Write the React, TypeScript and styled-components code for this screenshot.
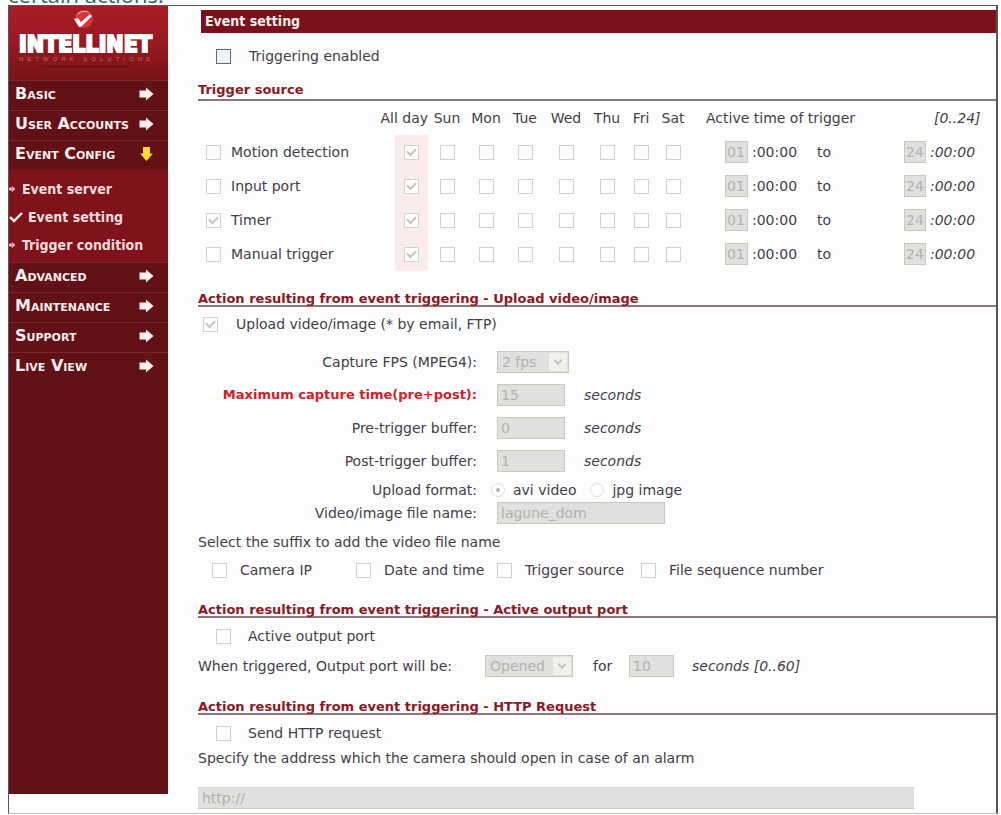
import React from "react";
import styled, { createGlobalStyle, css } from "styled-components";

const sans = `"DejaVu Sans", Verdana, sans-serif`;
const narrow = `"DejaVu Sans Condensed", "DejaVu Sans", Tahoma, sans-serif`;

const GlobalStyle = createGlobalStyle`
  * { box-sizing: border-box; }
  body { margin: 0; background: #fdfdfd; color: #443e48; font: 14px/16px ${sans}; }
  input, select, button { font: inherit; margin: 0; }
`;

const Page = styled.div`
  padding: 0 3px 0 8px;
`;

const Intro = styled.p`
  display: flex;
  align-items: flex-end;
  height: 5px;
  margin: 0;
  overflow: hidden;
  font: 22px/21px "Open Sans", sans-serif;
  color: #555;
`;

const Frame = styled.div`
  display: flex;
  align-items: flex-start;
  border: 1px solid #56565a;
  border-right-width: 2px;
  border-bottom-color: #c4c4c0;
`;

const Sidebar = styled.nav`
  flex: none;
  width: 159px;
  min-height: 788px;
  background: #621117;
  color: #fbeeee;
`;

const Brand = styled.div`
  height: 74px;
  background: linear-gradient(#a81d25, #9a1a22 45%, #7a131a);

  svg { display: block; }
`;

const Menu = styled.ul`
  list-style: none;
  margin: 0;
  padding: 0;
`;

const MenuButton = styled.button`
  display: flex;
  align-items: center;
  justify-content: space-between;
  width: 100%;
  height: 30px;
  padding: 0 14px 3px 6px;
  border: 0;
  border-top: 1px solid #7d252c;
  background: none;
  color: inherit;
  font: bold small-caps 16px/20px ${sans};
  text-align: left;
  white-space: nowrap;
`;

const SubMenu = styled(Menu)`
  padding: 5px 0 3px;
  background: #7f121a;
`;

const SubLink = styled.a`
  display: flex;
  align-items: center;
  gap: 5px;
  height: 28px;
  color: #f6dcdc;
  font: bold 14px/16px ${narrow};
  text-decoration: none;
  white-space: nowrap;
`;

const Main = styled.main`
  flex: 1;
  min-width: 0;
  padding: 4px 0 4px 30px;
`;

const TitleBar = styled.h1`
  margin: 0 0 0 3px;
  padding: 0 4px;
  background: #7a121b;
  color: #fbeeee;
  font: bold 14px/23px ${narrow};
`;

const Heading = styled.h2<{ $gap?: number; $line?: number }>`
  margin: ${(p) => p.$gap ?? 0}px 0 0;
  border-bottom: 2px solid #8e777a;
  color: #8c1922;
  font: bold 13px/${(p) => p.$line ?? 12}px ${sans};
`;

const Row = styled.div<{ $h: number; $indent?: number }>`
  display: flex;
  align-items: center;
  height: ${(p) => p.$h}px;
  padding-left: ${(p) => p.$indent ?? 0}px;
  white-space: nowrap;
`;

const CheckLabel = styled.label<{ $gap?: number; $w?: number }>`
  display: flex;
  align-items: center;
  gap: ${(p) => p.$gap ?? 14}px;
  width: ${(p) => (p.$w ? p.$w + "px" : "auto")};
  white-space: nowrap;
`;

const Check = styled.input.attrs({ type: "checkbox" })`
  appearance: none;
  flex: none;
  display: inline-grid;
  place-items: center;
  width: 15px;
  height: 15px;
  border: 1px solid #d3d1cd;
  background: #fefefe;
  vertical-align: middle;

  &:enabled { border-color: #4d7186; background: #f1f5f7; }

  &:checked::after {
    content: "";
    width: 7px;
    height: 4px;
    margin-top: -2px;
    border: solid #c6c2be;
    border-width: 0 0 2px 2px;
    transform: rotate(-45deg);
  }
`;

const Radio = styled.input.attrs({ type: "radio" })`
  appearance: none;
  flex: none;
  display: grid;
  place-items: center;
  width: 14px;
  height: 14px;
  border: 1px solid #e2e0da;
  border-radius: 50%;

  &:checked::after {
    content: "";
    width: 4px;
    height: 4px;
    border-radius: 50%;
    background: #b5b5b0;
  }
`;

const Schedule = styled.table`
  width: 100%;
  table-layout: fixed;
  border-collapse: collapse;
  white-space: nowrap;

  tr { height: 34px; }
  th, td { padding: 0; text-align: center; font-weight: normal; }
`;

const SourceCell = styled.th`
  && { padding-left: 8px; text-align: left; }
`;

const AllDayHead = styled.th`
  && { text-align: right; }
`;

const AllDayBox = styled.div`
  display: grid;
  place-items: center;
  width: 33px;
  height: 34px;
  margin-left: auto;
  background: #fbecec;
`;

const TimeCell = styled.td<{ $pad?: number }>`
  && { padding-left: ${(p) => p.$pad ?? 0}px; text-align: left; }
`;

const RangeHead = styled.th<{ $pad: number }>`
  && { padding-left: ${(p) => p.$pad}px; text-align: left; }
`;

const disabledBox = css`
  height: 22px;
  border: 1px solid #c8c8bc;
  border-radius: 0;
  background: #e0e0de;
  color: #b3b3ae;
  opacity: 1;
`;

const Field = styled.input<{ $w: number }>`
  ${disabledBox}
  width: ${(p) => p.$w}px;
  padding: 0 3px;
`;

const HourField = styled(Field)`
  padding: 0 1px;
  margin-right: 4px;
`;

const UrlField = styled(Field)`
  display: block;
  width: calc(100% - 82px);
  margin-top: 22px;
  border-color: #dcdcd8 #dcdcd8 #c8c8bc;
`;

const SelectWrap = styled.span<{ $w: number }>`
  position: relative;
  display: flex;
  width: ${(p) => p.$w}px;

  svg {
    position: absolute;
    top: 2px;
    right: 2px;
    pointer-events: none;
  }
`;

const Select = styled.select`
  ${disabledBox}
  appearance: none;
  width: 100%;
  padding: 0 4px;
`;

const Form = styled.div`
  padding-top: 4px;
`;

const FormRow = styled.div<{ $h: number }>`
  display: grid;
  grid-template-columns: 279px auto;
  justify-content: start;
  align-items: center;
  column-gap: 20px;
  height: ${(p) => p.$h}px;
  white-space: nowrap;
`;

const FormLabel = styled.label<{ $alert?: boolean }>`
  text-align: right;
  ${(p) => p.$alert && css`color: #cf1f2b; font-weight: bold; font-size: 13px;`}
`;

const Controls = styled.div<{ $gap?: number; $pull?: boolean }>`
  display: flex;
  align-items: center;
  gap: ${(p) => p.$gap ?? 19}px;
  margin-left: ${(p) => (p.$pull ? -6 : 0)}px;
`;

const Text = styled.p<{ $line: number }>`
  display: block;
  margin: 0;
  line-height: ${(p) => p.$line}px;
`;

const Spaced = styled.span<{ $l: number }>`
  margin-left: ${(p) => p.$l}px;
`;

const Arrow = ({ down }: { down?: boolean }) => (
  <svg width="15" height="14" viewBox="0 0 15 14" aria-hidden="true">
    <path
      d="M0.500 3.500H7V0.500L14.500 7L7 13.500V10.500H0.500Z"
      fill={down ? "#f8dc2c" : "#fdeeed"}
      transform={down ? "rotate(90 7.500 7)" : undefined}
    />
  </svg>
);

const Bullet = () => (
  <svg width="8" height="8" viewBox="0 0 8 8" aria-hidden="true">
    <path d="M0 2.500H3V1L6.500 4L3 7V5.500H0Z" fill="#e8a9a6" />
  </svg>
);

const Tick = () => (
  <svg width="14" height="12" viewBox="0 0 14 12" aria-hidden="true">
    <path d="M1 6L5 10L13 2" fill="none" stroke="#fff1ef" strokeWidth="2.400" />
  </svg>
);

const Logo = () => (
  <svg width="159" height="74" viewBox="0 0 159 74" role="img" aria-label="Intellinet Network Solutions">
    <circle cx="75" cy="13" r="9" fill="#d8343c" />
    <path d="M67 10A9 9 0 0 1 81 7Q73 4 67 10Z" fill="#f2a3a3" />
    <path d="M65 13L69 12L72 16L81 8L83 10L72 21L70 21Z" fill="#fff6f5" />
    <text x="10" y="46" fill="#fff" stroke="#fff" strokeWidth="2" fontFamily="DejaVu Sans Condensed, sans-serif" fontWeight="bold" fontSize="23">
      INTELLINET
    </text>
    <text x="10" y="55" fill="#c9646a" fontFamily="Liberation Sans, sans-serif" fontSize="6" letterSpacing="4">
      NETWORK SOLUTIONS
    </text>
    <path d="M32 60.500H120" stroke="#5d1419" strokeWidth="1.500" />
  </svg>
);

const Dropdown = ({ id, value, width }: { id: string; value: string; width: number }) => (
  <SelectWrap $w={width}>
    <Select id={id} disabled defaultValue={value}>
      <option>{value}</option>
    </Select>
    <svg width="18" height="18" viewBox="0 0 18 18" aria-hidden="true">
      <rect width="18" height="18" fill="#f1f1ec" />
      <path d="M5.500 7L9 10.500L12.500 7" fill="none" stroke="#c3c3b8" strokeWidth="2" />
    </svg>
  </SelectWrap>
);

const days = ["Sun", "Mon", "Tue", "Wed", "Thu", "Fri", "Sat"];
const columns = [182, 48, 38, 40, 38, 44, 38, 30, 34, 127, 87];
const sources = [
  { name: "Motion detection", on: false },
  { name: "Input port", on: false },
  { name: "Timer", on: true },
  { name: "Manual trigger", on: false },
];
const durations = [
  { id: "max", label: "Maximum capture time(pre+post):", value: "15", alert: true },
  { id: "pre", label: "Pre-trigger buffer:", value: "0", alert: false },
  { id: "post", label: "Post-trigger buffer:", value: "1", alert: false },
];
const suffixes = [
  { name: "Camera IP", width: 144 },
  { name: "Date and time", width: 141 },
  { name: "Trigger source", width: 144 },
  { name: "File sequence number", width: 0 },
];

export default function App() {
  return (
    <Page>
      <GlobalStyle />
      <Intro>certain actions.</Intro>
      <Frame>
        <Sidebar>
          <Brand><Logo /></Brand>
          <Menu>
            <li><MenuButton>Basic<Arrow /></MenuButton></li>
            <li><MenuButton>User Accounts<Arrow /></MenuButton></li>
            <li>
              <MenuButton>Event Config<Arrow down /></MenuButton>
              <SubMenu>
                <li><SubLink href="#server"><Bullet />Event server</SubLink></li>
                <li><SubLink href="#setting"><Tick />Event setting</SubLink></li>
                <li><SubLink href="#condition"><Bullet />Trigger condition</SubLink></li>
              </SubMenu>
            </li>
            {["Advanced", "Maintenance", "Support", "Live View"].map((name) => (
              <li key={name}><MenuButton>{name}<Arrow /></MenuButton></li>
            ))}
          </Menu>
        </Sidebar>

        <Main>
          <TitleBar>Event setting</TitleBar>
          <Row $h={46} $indent={18}>
            <CheckLabel $gap={18}><Check />Triggering enabled</CheckLabel>
          </Row>

          <Heading $gap={2} $line={18}>Trigger source</Heading>
          <Schedule>
            <colgroup>
              {columns.map((w, i) => <col key={i} width={w} />)}
              <col />
            </colgroup>
            <thead>
              <tr>
                <td />
                <AllDayHead>All day</AllDayHead>
                {days.map((d) => <th key={d}>{d}</th>)}
                <RangeHead $pad={16} colSpan={2}>Active time of trigger</RangeHead>
                <RangeHead $pad={30}><i>[0..24]</i></RangeHead>
              </tr>
            </thead>
            <tbody>
              {sources.map(({ name, on }) => (
                <tr key={name}>
                  <SourceCell scope="row">
                    <CheckLabel $gap={10}><Check disabled defaultChecked={on} />{name}</CheckLabel>
                  </SourceCell>
                  <td>
                    <AllDayBox><Check disabled defaultChecked aria-label={`${name} all day`} /></AllDayBox>
                  </td>
                  {days.map((d) => (
                    <td key={d}><Check disabled aria-label={`${name} ${d}`} /></td>
                  ))}
                  <TimeCell $pad={35}>
                    <HourField $w={23} disabled defaultValue="01" aria-label={`${name} start hour`} />
                    :00:00
                  </TimeCell>
                  <TimeCell>to</TimeCell>
                  <TimeCell>
                    <HourField $w={22} disabled defaultValue="24" aria-label={`${name} end hour`} />
                    <i>:00:00</i>
                  </TimeCell>
                </tr>
              ))}
            </tbody>
          </Schedule>

          <Heading $gap={22}>Action resulting from event triggering - Upload video/image</Heading>
          <Row $h={34} $indent={5}>
            <CheckLabel $gap={18}><Check disabled defaultChecked />Upload video/image (* by email, FTP)</CheckLabel>
          </Row>
          <Form>
            <FormRow $h={33}>
              <FormLabel htmlFor="fps">Capture FPS (MPEG4):</FormLabel>
              <Dropdown id="fps" value="2 fps" width={72} />
            </FormRow>
            {durations.map((d) => (
              <FormRow key={d.id} $h={33}>
                <FormLabel htmlFor={d.id} $alert={d.alert}>{d.label}</FormLabel>
                <Controls>
                  <Field id={d.id} $w={68} disabled defaultValue={d.value} />
                  <i>seconds</i>
                </Controls>
              </FormRow>
            ))}
            <FormRow $h={25}>
              <FormLabel as="span">Upload format:</FormLabel>
              <Controls $pull $gap={14}>
                <CheckLabel $gap={8}><Radio name="format" disabled defaultChecked />avi video</CheckLabel>
                <CheckLabel $gap={8}><Radio name="format" disabled />jpg image</CheckLabel>
              </Controls>
            </FormRow>
            <FormRow $h={22}>
              <FormLabel htmlFor="file">Video/image file name:</FormLabel>
              <Field id="file" $w={168} disabled defaultValue="lagune_dom" />
            </FormRow>
          </Form>
          <Text $line={36}>Select the suffix to add the video file name</Text>
          <Row $h={20} $indent={14}>
            {suffixes.map((s) => (
              <CheckLabel key={s.name} $gap={13} $w={s.width}><Check disabled />{s.name}</CheckLabel>
            ))}
          </Row>

          <Heading $gap={24}>Action resulting from event triggering - Active output port</Heading>
          <Row $h={36} $indent={18}>
            <CheckLabel $gap={17}><Check disabled />Active output port</CheckLabel>
          </Row>
          <Row $h={24}>
            <CheckLabel htmlFor="port" $w={287}>When triggered, Output port will be:</CheckLabel>
            <Dropdown id="port" value="Opened" width={88} />
            <Spaced $l={20}><CheckLabel htmlFor="span" $w={36}>for</CheckLabel></Spaced>
            <Field id="span" $w={45} disabled defaultValue="10" />
            <Spaced $l={18}><i>seconds [0..60]</i></Spaced>
          </Row>

          <Heading $gap={23}>Action resulting from event triggering - HTTP Request</Heading>
          <Row $h={36} $indent={18}>
            <CheckLabel $gap={17}><Check disabled />Send HTTP request</CheckLabel>
          </Row>
          <Text as="label" htmlFor="url" $line={14}>
            Specify the address which the camera should open in case of an alarm
          </Text>
          <UrlField id="url" $w={717} disabled defaultValue="http://" />
        </Main>
      </Frame>
    </Page>
  );
}
